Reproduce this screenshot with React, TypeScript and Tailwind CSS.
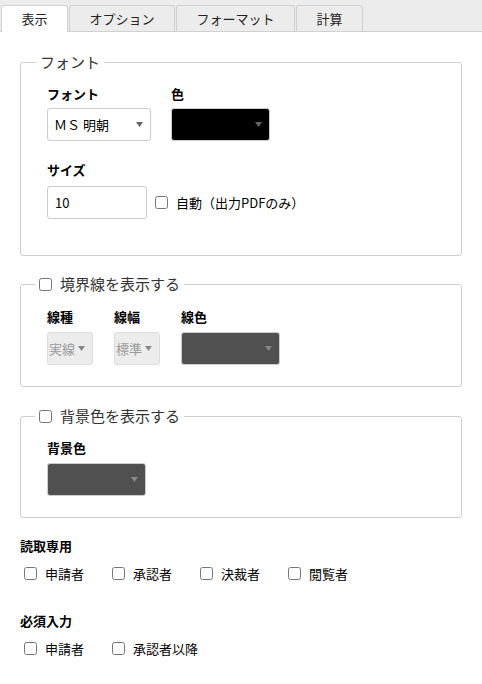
import React from 'react';

const font = { fontFamily: '"Noto Sans CJK JP", "Noto Sans", sans-serif' };

function Arrow({ color = '#666' }: { color?: string }) {
  return (
    <svg width="7" height="5" viewBox="0 0 7 5" className="shrink-0">
      <path d="M0 0 L7 0 L3.5 5 Z" fill={color} />
    </svg>
  );
}

function Check() {
  return <input type="checkbox" className="m-0 h-[13px] w-[13px] shrink-0" />;
}

function Label({ children }: { children: React.ReactNode }) {
  return <div className="h-[18px] text-[13px] font-bold leading-[18px] text-black">{children}</div>;
}

function Tab({ label, width, active }: { label: string; width: string; active?: boolean }) {
  return (
    <div
      className={
        'flex h-[26px] items-center justify-center rounded-t-[3px] border border-b-0 border-[#d0d0d0] text-[13px] ' +
        width +
        (active ? ' -mb-px h-[27px] bg-white' : ' bg-[#ececec]')
      }
    >
      {label}
    </div>
  );
}

export default function App() {
  return (
    <div className="min-h-[684px] w-[482px] bg-white text-[#222]" style={font}>
      <div className="flex h-[32px] items-end gap-px border-b border-[#d0d0d0] bg-[#ececec] pl-px">
        <Tab label="表示" width="w-[67px]" active />
        <Tab label="オプション" width="w-[106px]" />
        <Tab label="フォーマット" width="w-[119px]" />
        <Tab label="計算" width="w-[67px]" />
      </div>

      <fieldset className="mx-5 mt-[20px] rounded-[3px] border border-[#cfcfcf] px-[26px] pb-[36px] pt-[13px]">
        <legend className="-ml-[11px] px-1 text-[15px] leading-[20px] text-[#333]">フォント</legend>
        <div className="flex gap-5">
          <div>
            <Label>フォント</Label>
            <div className="mt-[5px] flex h-[33px] w-[104px] items-center justify-between rounded-[3px] border border-[#ccc] pl-[6px] pr-[7px] text-[13px] text-black">
              <span>ＭＳ 明朝</span>
              <Arrow />
            </div>
          </div>
          <div>
            <Label>色</Label>
            <div className="mt-[5px] flex h-[33px] w-[99px] items-center justify-end rounded-[3px] border border-[#ccc] bg-black pr-[7px]">
              <Arrow />
            </div>
          </div>
        </div>
        <div className="mt-[20px]">
          <Label>サイズ</Label>
          <div className="mt-[7px] flex items-center gap-2">
            <div className="flex h-[33px] w-[100px] items-center rounded-[3px] border border-[#ccc] pl-[7px] text-[13px] text-black">
              10
            </div>
            <label className="flex items-center gap-2 text-[13px] text-black">
              <Check />
              自動（出力PDFのみ）
            </label>
          </div>
        </div>
      </fieldset>

      <fieldset className="mx-5 mt-[18px] rounded-[3px] border border-[#cfcfcf] px-[26px] pb-[21px] pt-[14px]">
        <legend className="-ml-[12px] px-1 text-[15px] leading-[20px] text-[#333]">
          <span className="flex items-center gap-2">
            <Check />
            境界線を表示する
          </span>
        </legend>
        <div className="flex gap-[21px]">
          <div>
            <Label>線種</Label>
            <div className="mt-[6px] flex h-[33px] w-[46px] items-center gap-[3px] rounded-[3px] border border-[#ddd] bg-[#ececec] pl-[1px] text-[13px] text-[#999]">
              <span>実線</span>
              <Arrow color="#888" />
            </div>
          </div>
          <div>
            <Label>線幅</Label>
            <div className="mt-[6px] flex h-[33px] w-[46px] items-center gap-[3px] rounded-[3px] border border-[#ddd] bg-[#ececec] pl-[1px] text-[13px] text-[#999]">
              <span>標準</span>
              <Arrow color="#888" />
            </div>
          </div>
          <div>
            <Label>線色</Label>
            <div className="mt-[6px] flex h-[33px] w-[99px] items-center justify-end rounded-[3px] border border-[#ccc] bg-[#505050] pr-[7px]">
              <Arrow color="#888" />
            </div>
          </div>
        </div>
      </fieldset>

      <fieldset className="mx-5 mt-[19px] rounded-[3px] border border-[#cfcfcf] px-[26px] pb-[21px] pt-[13px]">
        <legend className="-ml-[12px] px-1 text-[15px] leading-[20px] text-[#333]">
          <span className="flex items-center gap-2">
            <Check />
            背景色を表示する
          </span>
        </legend>
        <Label>背景色</Label>
        <div className="mt-[6px] flex h-[33px] w-[99px] items-center justify-end rounded-[3px] border border-[#ccc] bg-[#505050] pr-[7px]">
          <Arrow color="#888" />
        </div>
      </fieldset>

      <div className="mx-5 mt-[19px]">
        <Label>読取専用</Label>
        <div className="mt-[9px] flex text-[13px] text-black">
          {['申請者', '承認者', '決裁者', '閲覧者'].map((t) => (
            <label key={t} className="flex w-[88px] items-center gap-2 pl-1">
              <Check />
              {t}
            </label>
          ))}
        </div>
      </div>

      <div className="mx-5 mt-[28px]">
        <Label>必須入力</Label>
        <div className="mt-[9px] flex text-[13px] text-black">
          {['申請者', '承認者以降'].map((t) => (
            <label key={t} className="flex min-w-[88px] items-center gap-2 pl-1">
              <Check />
              {t}
            </label>
          ))}
        </div>
      </div>
    </div>
  );
}
